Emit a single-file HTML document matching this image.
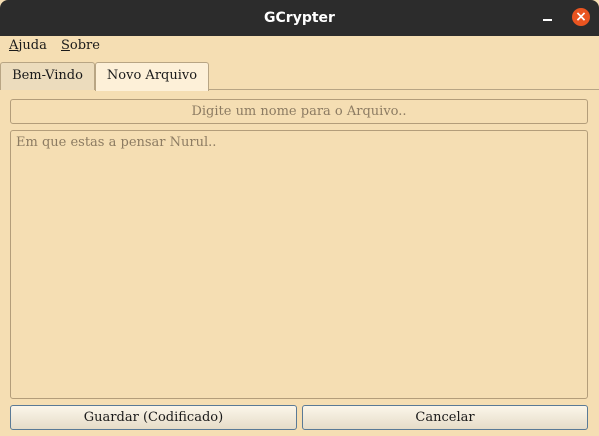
<!DOCTYPE html>
<html><head><style>
*{box-sizing:border-box;margin:0;padding:0}
body{width:599px;height:436px;background:#f5deb3;font-family:"DejaVu Serif","Liberation Serif",serif;font-size:13px;color:#1a1a1a;position:relative;overflow:hidden}
.title{position:absolute;left:0;top:0;width:599px;height:36px;background:#2c2c2c;color:#fff;font-family:"DejaVu Sans","Liberation Sans",sans-serif;font-weight:bold;font-size:14px;text-align:center;line-height:36px;border-radius:8px 8px 0 0}
.min{position:absolute;left:543px;top:19px;width:9px;height:2px;background:#fff}
.close{position:absolute;left:572px;top:8px;width:18px;height:18px;border-radius:50%;background:#e95420;color:#fff;font-size:14px;line-height:18px;text-align:center;font-family:"DejaVu Sans",sans-serif;font-weight:bold}
.menu{position:absolute;top:38px}
.tab{position:absolute;top:62px;height:28px;border:1px solid #b8a584;border-bottom:none;border-radius:3px 3px 0 0;line-height:26px;text-align:center}
.frame{position:absolute;left:0;top:89px;width:599px;height:347px;border-top:1px solid #b8a584}
.box{position:absolute;border:1px solid #b39d7a;border-radius:3px;background:#f5deb3;color:#8c7b62}
.btn{position:absolute;top:405px;height:25px;border:1px solid #5a7a96;border-radius:3px;background:linear-gradient(#fbf6ea,#e6dcc8);text-align:center;line-height:23px}
</style></head><body>
<div class="title">GCrypter</div>
<div class="min"></div>
<div class="close">×</div>
<div class="menu" style="left:9px"><u>A</u>juda</div>
<div class="menu" style="left:61px"><u>S</u>obre</div>
<div class="frame"></div>
<div class="tab" style="left:0;width:95px;background:#ecdcbd">Bem-Vindo</div>
<div class="tab" style="left:95px;width:114px;background:#fdf0d8;height:29px">Novo Arquivo</div>
<div class="box" style="left:10px;top:99px;width:578px;height:25px;text-align:center;line-height:23px">Digite um nome para o Arquivo..</div>
<div class="box" style="left:10px;top:130px;width:578px;height:269px;padding:4px 5px">Em que estas a pensar Nurul..</div>
<div class="btn" style="left:10px;width:287px">Guardar (Codificado)</div>
<div class="btn" style="left:302px;width:286px">Cancelar</div>
</body></html>
